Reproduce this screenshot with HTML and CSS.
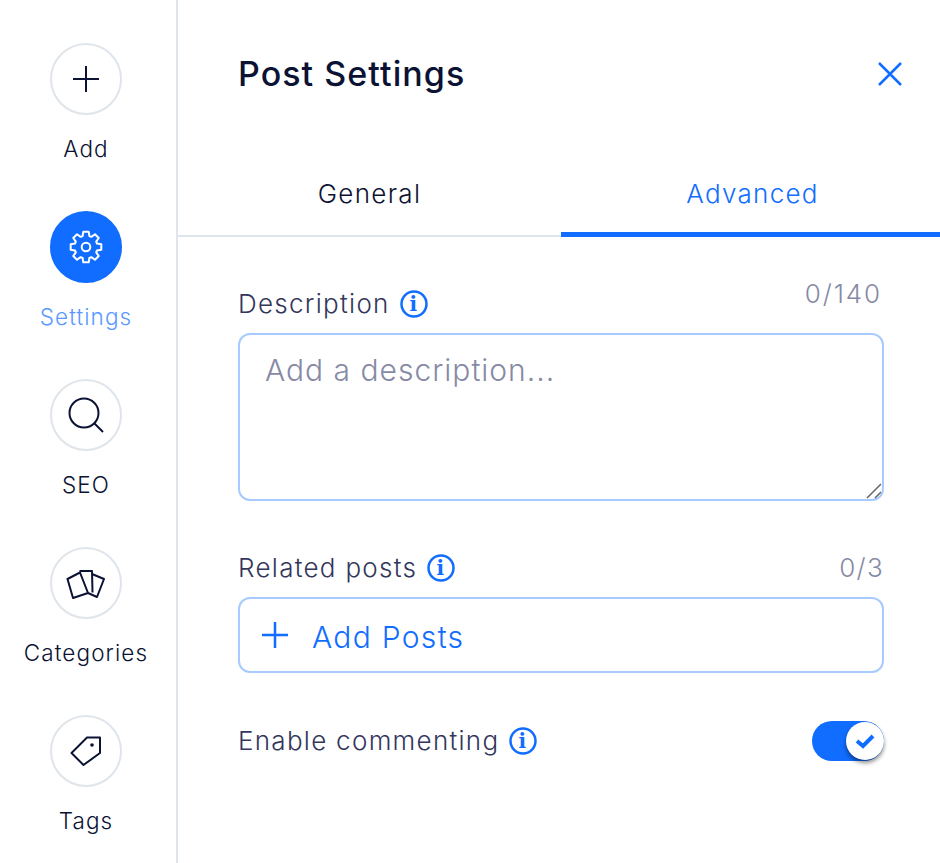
FILE: index.html
```html
<!DOCTYPE html>
<html lang="en">
<head>
<meta charset="utf-8">
<title>Post Settings</title>
<link rel="stylesheet" href="styles.css">
</head>
<body>
<div class="app">
  <nav class="rail">
    <div class="rail-item">
      <span class="rail-btn">
        <svg width="28" height="28" viewBox="0 0 28 28"><path d="M14 1v26M1 14h26" class="ico"/></svg>
      </span>
      <span class="rail-label">Add</span>
    </div>
    <div class="rail-item active">
      <span class="rail-btn">
        <svg width="34" height="34" viewBox="0 0 34 34"><path class="ico-w" stroke-linejoin="round" d="M13.6 6L14.3 1.700H19.700L20.400 6L22.370 6.820L26 4.270L29.730 8L27.180 11.630L28 13.600L32.300 14.300V19.700L28 20.400L27.180 22.370L29.730 26L26 29.730L22.370 27.180L20.400 28L19.700 32.300H14.300L13.600 28L11.630 27.180L8 29.730L4.270 26L6.820 22.370L6 20.400L1.700 19.700V14.300L6 13.600L6.820 11.630L4.270 8L8 4.270L11.630 6.820Z"/><circle class="ico-w" cx="17" cy="17" r="4.300"/></svg>
      </span>
      <span class="rail-label">Settings</span>
    </div>
    <div class="rail-item">
      <span class="rail-btn">
        <svg width="36" height="36" viewBox="0 0 36 36"><circle class="ico" cx="16" cy="16" r="14.500"/><path class="ico" d="M26 26l9 9"/></svg>
      </span>
      <span class="rail-label">SEO</span>
    </div>
    <div class="rail-item">
      <span class="rail-btn">
        <svg width="40" height="32" viewBox="0 0 40 32"><path class="ico" stroke-linejoin="round" d="M1.500 12 14 5.500 22 26 7 31z"/><path class="ico" stroke-linejoin="round" d="M13.500 4H26L26.500 25.500"/><path class="ico" stroke-linejoin="round" d="M26 7l12 5-7 18-9-4"/></svg>
      </span>
      <span class="rail-label">Categories</span>
    </div>
    <div class="rail-item">
      <span class="rail-btn">
        <svg width="32" height="32" viewBox="0 0 32 32"><path class="ico" stroke-linejoin="round" d="M17 2.500h13v15.500L13.500 30 1.500 18z"/><circle cx="22" cy="10" r="1.800" class="dot"/></svg>
      </span>
      <span class="rail-label">Tags</span>
    </div>
  </nav>
  <main class="panel">
    <header class="panel-head">
      <h1 class="panel-title">Post Settings</h1>
      <svg class="close" width="26" height="26" viewBox="0 0 26 26"><path d="M2 2l22 22M24 2L2 24"/></svg>
    </header>
    <div class="tabs">
      <div class="tab tab-first">General</div>
      <div class="tab current">Advanced</div>
    </div>
    <section class="form">
      <div class="field-head">
        <span class="field-label">Description <svg class="info" width="28" height="28" viewBox="0 0 28 28"><circle cx="14" cy="14" r="12.500"/><text x="14" y="21" text-anchor="middle">i</text></svg></span>
        <span class="count count-up">0/140</span>
      </div>
      <div class="textarea">
        <span class="placeholder">Add a description...</span>
        <svg class="grip" width="16" height="16" viewBox="0 0 16 16"><path d="M1 15L15 1M9 15l6-6"/></svg>
      </div>
      <div class="field-head second">
        <span class="field-label">Related posts <svg class="info" width="28" height="28" viewBox="0 0 28 28"><circle cx="14" cy="14" r="12.500"/><text x="14" y="21" text-anchor="middle">i</text></svg></span>
        <span class="count">0/3</span>
      </div>
      <div class="add-posts">
        <svg width="26" height="26" viewBox="0 0 26 26"><path d="M13 0v26M0 13h26"/></svg>
        <span class="add-text">Add Posts</span>
      </div>
      <div class="toggle-row">
        <span class="field-label">Enable commenting <svg class="info" width="28" height="28" viewBox="0 0 28 28"><circle cx="14" cy="14" r="12.500"/><text x="14" y="21" text-anchor="middle">i</text></svg></span>
        <span class="toggle"><span class="knob"><svg width="20" height="16" viewBox="0 0 20 16"><path d="M2 8l6 5L18 3"/></svg></span></span>
      </div>
    </section>
  </main>
</div>
</body>
</html>
```
FILE: styles.css
```css
html, body { margin: 0; padding: 0; background: #fff; }
body { font-family: Inter, "Noto Sans", sans-serif; font-weight: 350; color: #0b1233; width: 940px; height: 863px; overflow: hidden; }
.app { display: flex; height: 863px; }

.rail { width: 172px; flex: none; border-right: 2px solid #dfe5eb; padding: 43px 4px 0 0; display: flex; flex-direction: column; height: 820px; }
.rail-item { height: 168px; display: flex; flex-direction: column; align-items: center; flex: none; }
.rail-btn { width: 72px; height: 72px; border: 2px solid #dfe5eb; border-radius: 50%; box-sizing: border-box; display: flex; align-items: center; justify-content: center; flex: none; }
.rail-label { font-size: 22.5px; line-height: 30px; margin-top: 19px; letter-spacing: 1.1px; color: #0b1233; }
.active .rail-btn { background: #116dff; border-color: #116dff; }
.active .rail-label { color: #5999ff; }
.ico { fill: none; stroke: #0b1233; stroke-width: 2; }
.ico-w { fill: none; stroke: #fff; stroke-width: 2; }
.dot { fill: #0b1233; }

.panel { flex: 1; min-width: 0; }
.panel-head { height: 148px; box-sizing: border-box; padding: 49px 37px 0 60px; display: flex; justify-content: space-between; align-items: flex-start; }
.panel-title { margin: 0; font-size: 34px; line-height: 50px; font-weight: 450; letter-spacing: 1.05px; color: #0b1233; }
.close { margin-top: 12px; }
.close path { fill: none; stroke: #116dff; stroke-width: 2.500; }

.tabs { display: flex; height: 89px; border-bottom: 2px solid #dfe5eb; box-sizing: border-box; }
.tab { flex: 1; text-align: center; font-size: 26px; line-height: 36px; padding-top: 28px; letter-spacing: 1.3px; color: #0b1233; position: relative; }
.tab-first { flex: none; width: 383px; }
.tab.current { color: #116dff; padding-left: 4px; }
.tab.current::after { content: ""; position: absolute; left: 0; right: 0; bottom: -2px; height: 5px; background: #116dff; }

.form { padding: 0 56px 0 60px; }
.field-head { display: flex; justify-content: space-between; align-items: flex-start; margin-top: 49px; height: 47px; }
.field-label { font-size: 26px; line-height: 36px; letter-spacing: 1.28px; color: #32365b; display: flex; align-items: center; gap: 10px; }
.count { font-size: 26px; line-height: 36px; letter-spacing: 1.3px; color: #868aa5; }
.count-up { margin: -10px 2px 0 0; letter-spacing: 1.9px; }
.info circle { fill: none; stroke: #116dff; stroke-width: 2.500; }
.info text { fill: #116dff; font-family: "DejaVu Serif", serif; font-weight: 700; font-size: 20px; }
.textarea { height: 168px; border: 2px solid #a8caff; border-radius: 12px; box-sizing: border-box; position: relative; padding: 15px 25px; }
.placeholder { font-size: 30px; line-height: 40px; letter-spacing: 1px; color: #868aa5; }
.grip { position: absolute; right: 0; bottom: 0; }
.grip path { fill: none; stroke: #666; stroke-width: 1.500; }
.second { margin-top: 49px; height: 47px; }
.add-posts { height: 76px; border: 2px solid #a8caff; border-radius: 12px; box-sizing: border-box; padding-left: 22px; display: flex; align-items: center; gap: 24px; color: #116dff; font-size: 30px; letter-spacing: 1.3px; }
.add-text { padding-top: 3px; }
.add-posts path { fill: none; stroke: #116dff; stroke-width: 2.500; }
.toggle-row { display: flex; justify-content: space-between; align-items: center; margin-top: 48px; }
.toggle { width: 72px; height: 40px; border-radius: 20px; background: #116dff; display: block; position: relative; }
.knob { position: absolute; right: 0; top: 1px; width: 38px; height: 38px; border-radius: 50%; background: #fff; box-shadow: 0 3px 4px rgba(0,0,0,.45); display: flex; align-items: center; justify-content: center; }
.knob path { fill: none; stroke: #116dff; stroke-width: 4; }
```
